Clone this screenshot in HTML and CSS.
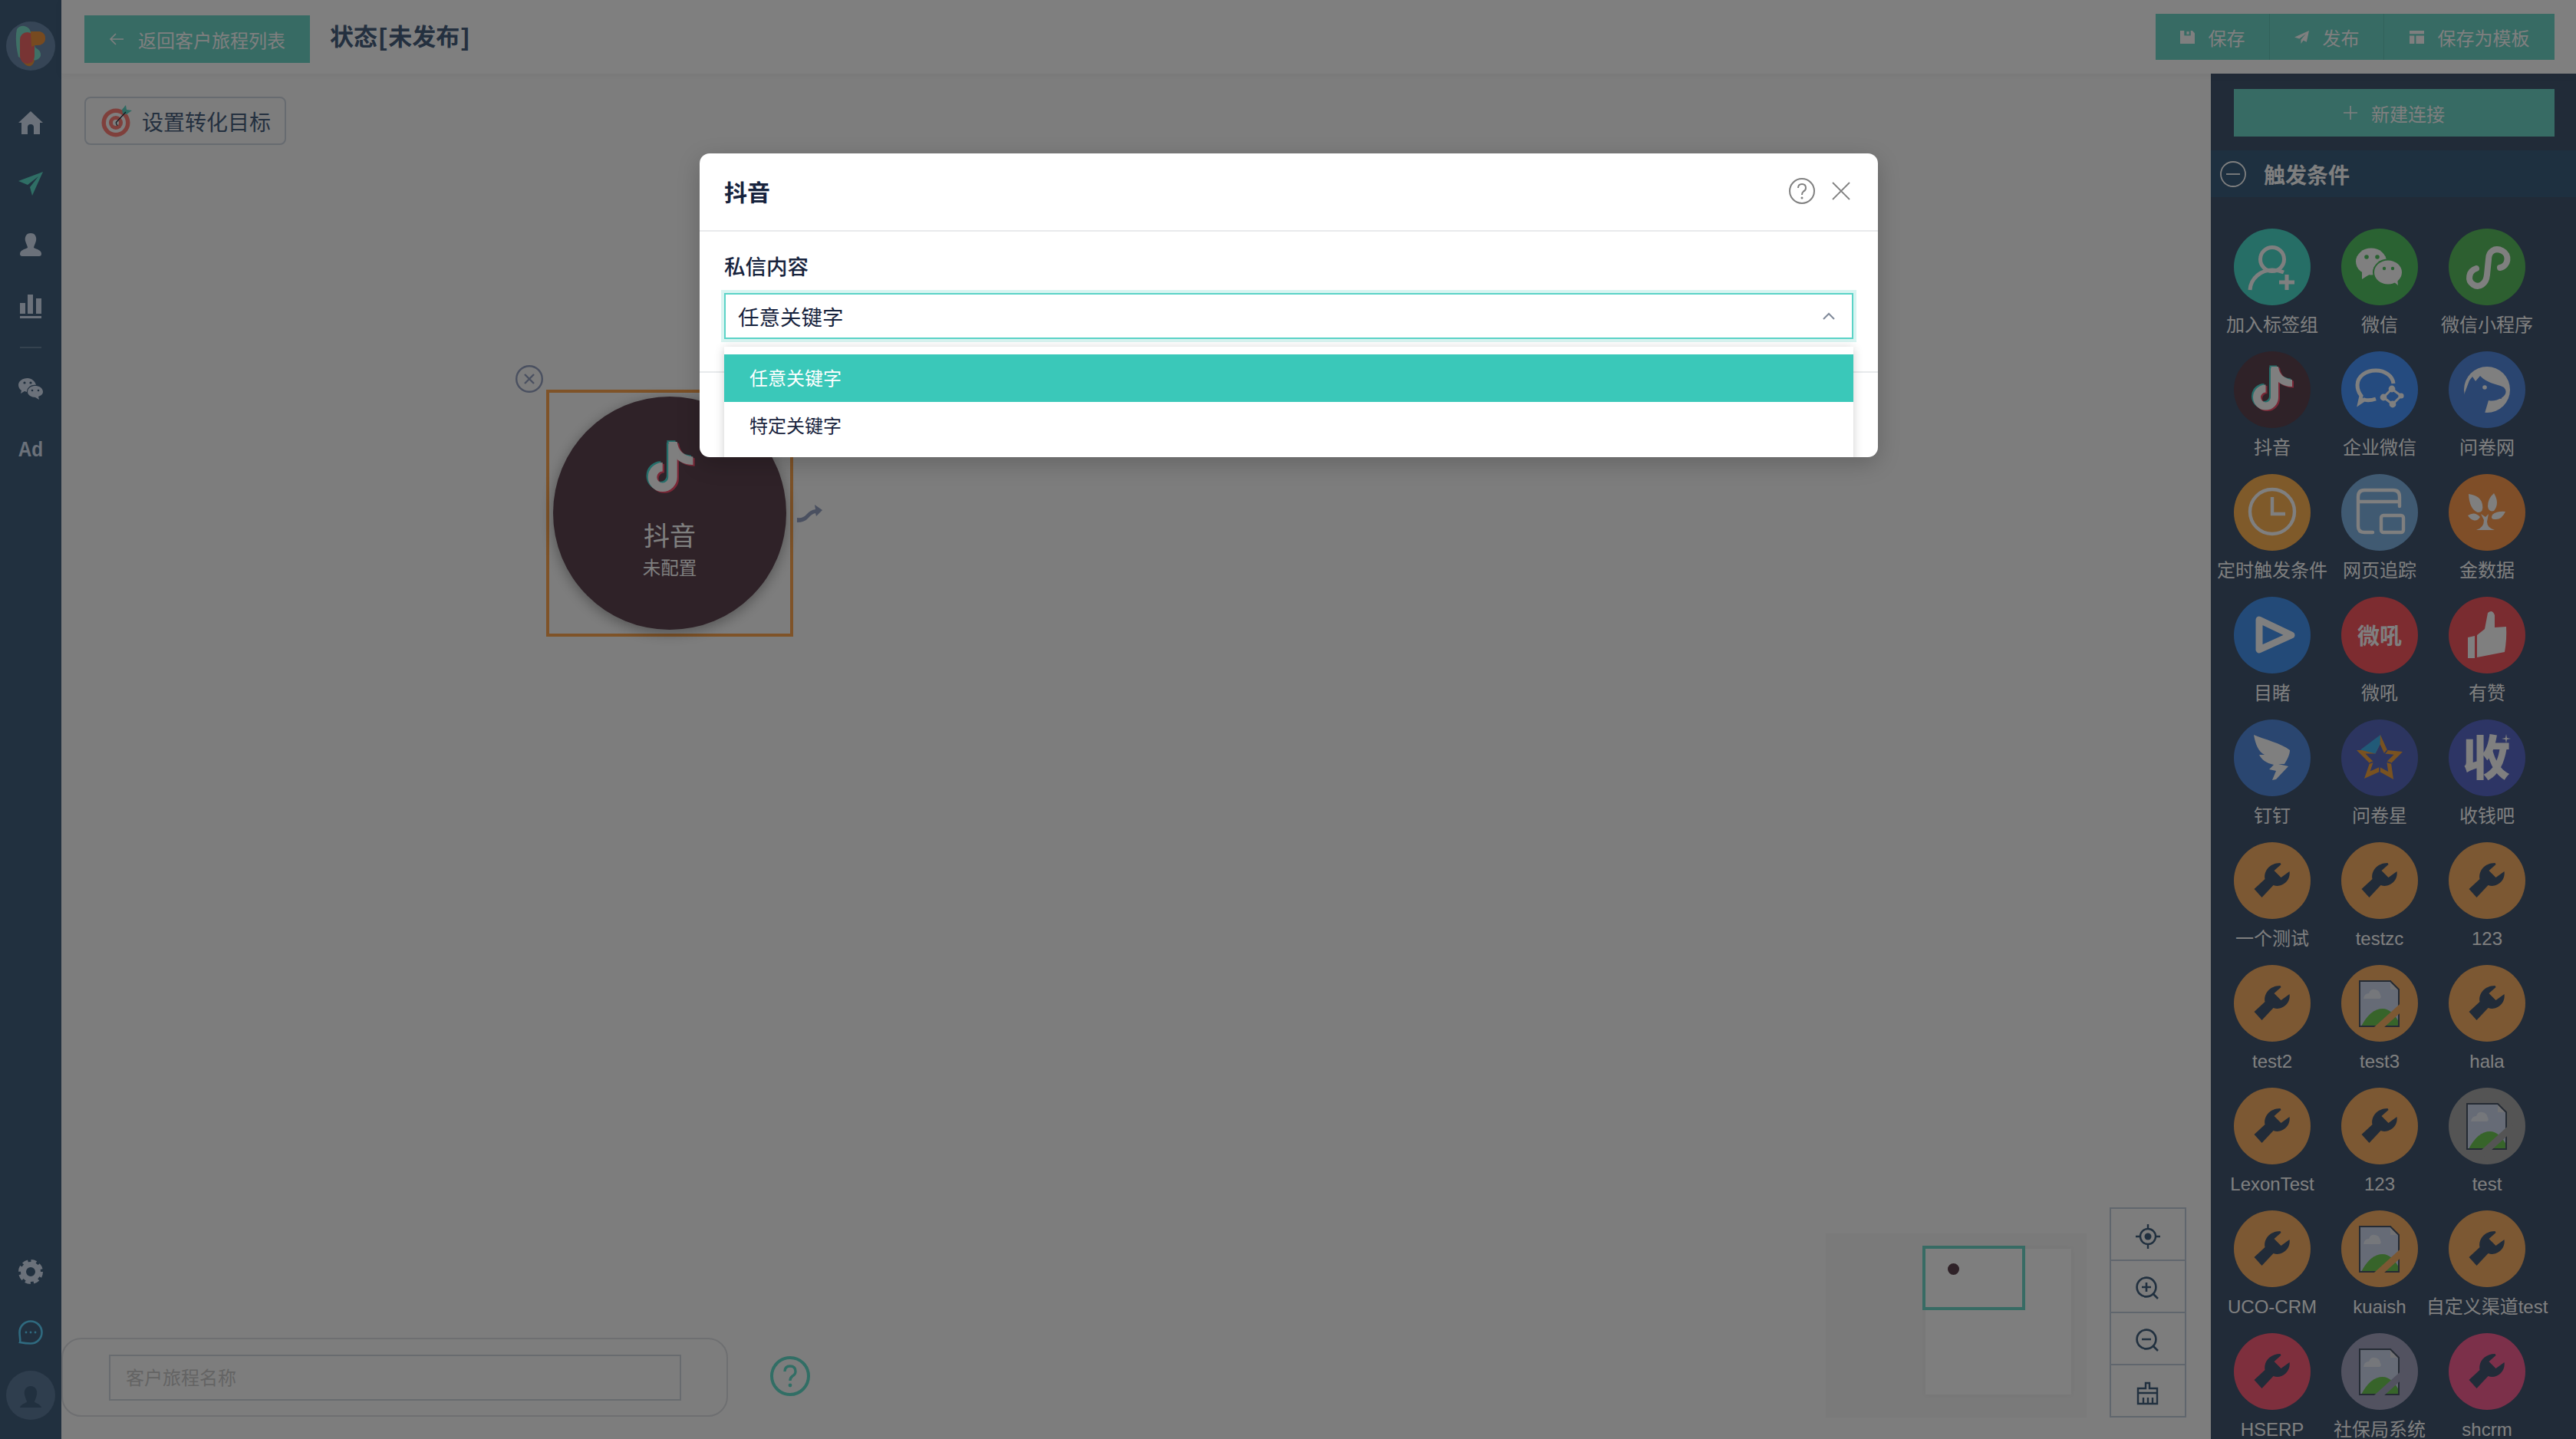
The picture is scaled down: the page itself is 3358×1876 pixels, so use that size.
FILE: index.html
```html
<!DOCTYPE html>
<html lang="zh-CN">
<head>
<meta charset="utf-8">
<title>客户旅程</title>
<link rel="stylesheet" href="styles.css">
</head>
<body>
<svg class="defs" width="0" height="0" aria-hidden="true">
  <symbol id="wrench" viewBox="0 0 100 100">
    <g transform="translate(26.5 26)"><path fill="#425670" d="M0 35 L14 22 C12 12 20 1 34 1 L35 3 L26 11 L35 20 L46 12 C48 24 36 34 25 30 L10 46 Z"/></g>
  </symbol>
  <symbol id="broken" viewBox="0 0 100 100">
    <path fill="#ccd6ec" d="M24 21 H64 L75 32 V80 H24 Z"/>
    <path fill="#e4e4e8" d="M64 21 L75 32 H64 Z"/>
    <path fill="#fff" opacity=".6" d="M29 44 Q30 37 36 37 Q38 31 44 32 Q50 33 51 39 Q53 43 50 44 Z"/>
    <path fill="#6fc854" d="M26 80 Q38 57 54 57 Q66 57 76 76 V80 Z"/>
    <path fill="none" stroke="#4a5668" stroke-width="2" d="M24 21 H64 L75 32 V80 H24 Z"/>
    <path fill="none" stroke="currentColor" stroke-width="9" d="M44 86 L84 50"/>
  </symbol>
  <symbol id="tiktok" viewBox="0 0 100 100">
    <g transform="translate(-2 -1.5)" fill="#4adcd4" stroke="#4adcd4">
      <path fill="none" stroke-width="10" d="M53 22 V60 A11.5 11.5 0 1 1 41.5 48.5"/>
      <path stroke="none" d="M48 20 H58 C59 30 66 36 76 37 V46 C69 46 63 44 58 40 Z"/>
    </g>
    <g transform="translate(2 1.5)" fill="#f4506e" stroke="#f4506e">
      <path fill="none" stroke-width="10" d="M53 22 V60 A11.5 11.5 0 1 1 41.5 48.5"/>
      <path stroke="none" d="M48 20 H58 C59 30 66 36 76 37 V46 C69 46 63 44 58 40 Z"/>
    </g>
    <g fill="#fff" stroke="#fff">
      <path fill="none" stroke-width="10" d="M53 22 V60 A11.5 11.5 0 1 1 41.5 48.5"/>
      <path stroke="none" d="M48 20 H58 C59 30 66 36 76 37 V46 C69 46 63 44 58 40 Z"/>
    </g>
  </symbol>
</svg>

<div class="app">
  <aside class="sidebar">
    <svg class="logo" viewBox="0 0 64 64">
      <circle cx="32" cy="32" r="32" fill="#6c8aac"/>
      <path fill="#7ee0cc" d="M14 10 Q18 5 24 6 Q31 8 32 14 L38 34 Q46 38 45 45 Q43 50 36 51 L26 52 L16 46 Q12 30 13 16 Z"/>
      <path fill="#ec9440" d="M20 50 Q26 60 32 58 Q36 56 37 50 Z"/>
      <rect x="18" y="14" width="19" height="41" rx="9.5" fill="#f06868"/>
      <path fill="#ee9440" d="M32 13 H44 Q52 15 51 24 Q49 32 38 31 L33 33 Z"/>
    </svg>
    <svg class="nav-ico nav-home" viewBox="0 0 32 32"><path fill="#d6e2f4" d="M16 2 L32 17 H28 V32 H20 V23 Q20 19 16 19 Q12 19 12 23 V32 H4 V17 H0 Z"/></svg>
    <svg class="nav-ico nav-send" viewBox="0 0 32 32"><path fill="#5edccb" d="M32 1 L0 13 L12 18 L26 7 L15 21 L18 32 Z"/></svg>
    <svg class="nav-ico nav-user" viewBox="0 0 32 32"><path fill="#d6e2f4" d="M16 1 C22 1 24 6 23 11 C22 15 20 18 20 20 C24 22 30 23 30 28 Q30 31 27 31 H5 Q2 31 2 28 C2 23 8 22 12 20 C12 18 10 15 9 11 C8 6 10 1 16 1 Z"/></svg>
    <svg class="nav-ico nav-bars" viewBox="0 0 32 32"><path fill="#d6e2f4" d="M2 12 H9 V26 H2 Z M12 1 H19 V26 H12 Z M23 6 H30 V26 H23 Z M2 29 H30 V32 H2 Z"/></svg>
    <div class="nav-rule"></div>
    <svg class="nav-ico nav-wx" viewBox="0 0 32 32"><path fill="#d6e2f4" d="M12 3 C5 3 0 7 0 12 C0 15 2 18 4 19 L3 23 L8 20 C9 20 10 21 11 21 C11 15 17 11 23 12 C22 7 17 3 12 3 Z"/><path fill="#d6e2f4" d="M22 13 C17 13 12 16 12 21 C12 25 17 28 22 28 L27 31 L26 27 C29 26 32 24 32 21 C32 16 27 13 22 13 Z"/><circle cx="8" cy="9" r="1.6" fill="#42607e"/><circle cx="16" cy="9" r="1.6" fill="#42607e"/><circle cx="18" cy="19" r="1.3" fill="#42607e"/><circle cx="26" cy="19" r="1.3" fill="#42607e"/></svg>
    <div class="nav-ad">Ad</div>
    <div class="nav-bottom">
      <svg class="nav-ico nav-gear" viewBox="0 0 32 32"><circle cx="16" cy="16" r="9.5" fill="none" stroke="#d6e2f4" stroke-width="7"/><circle cx="16" cy="16" r="14" fill="none" stroke="#d6e2f4" stroke-width="4" stroke-dasharray="7 4"/></svg>
      <svg class="nav-ico nav-chat" viewBox="0 0 32 32"><path fill="none" stroke="#5ed4ff" stroke-width="2.6" d="M16 1.5 C24 1.5 30.5 8 30.5 16 C30.5 24 24 30.5 16 30.5 C12 30.5 7 30 2 29 C3 27 1.5 22 1.5 16 C1.5 8 8 1.5 16 1.5 Z"/><circle cx="10" cy="16" r="1.4" fill="#5ed4ff"/><circle cx="16" cy="16" r="1.4" fill="#5ed4ff"/><circle cx="22" cy="16" r="1.4" fill="#5ed4ff"/></svg>
      <div class="avatar">
        <svg viewBox="0 0 64 64"><path fill="#42607e" d="M32 20 C38 20 41 25 40 31 C39 36 37 39 37 41 C42 43 46 46 46 48 V48 H18 C18 46 22 43 27 41 C27 39 25 36 24 31 C23 25 26 20 32 20 Z"/></svg>
      </div>
    </div>
  </aside>

  <div class="main">
    <header class="topbar">
      <button class="btn-back">
        <svg class="btn-ico" viewBox="0 0 20 20"><path fill="none" stroke="#fff" stroke-width="1.6" d="M19 10 H2 M9 3 L2 10 L9 17"/></svg>
        <span>返回客户旅程列表</span>
      </button>
      <h1 class="page-title">状态<span class="br">[</span>未发布<span class="br">]</span></h1>
      <div class="actions">
        <button class="act act-save">
          <svg class="act-ico" viewBox="0 0 18 18"><path fill="#fff" d="M0 1 H15 L18 4 V17 H0 Z"/><rect x="5" y="1" width="8" height="6" fill="#6ed6c8"/><rect x="8" y="2" width="3" height="3.5" fill="#fff"/></svg>
          <span>保存</span>
        </button>
        <button class="act act-pub">
          <svg class="act-ico" viewBox="0 0 18 18"><path fill="#fff" d="M18 1 L0 9 L6 11 L14 5 L8 12 V17 L11 13 L15 15 Z"/></svg>
          <span>发布</span>
        </button>
        <button class="act act-tpl">
          <svg class="act-ico" viewBox="0 0 18 18"><path fill="#fff" d="M0 1 H18 V5 H0 Z M0 7 H6 V17 H0 Z M8 7 H18 V17 H8 Z"/></svg>
          <span>保存为模板</span>
        </button>
      </div>
    </header>

    <div class="workspace">
      <section class="canvas">
        <button class="goal">
          <svg class="goal-ico" viewBox="0 0 40 42">
            <circle cx="19" cy="23" r="18.5" fill="#ff8078"/>
            <circle cx="19" cy="23" r="13" fill="#fff"/>
            <circle cx="19" cy="23" r="9" fill="#ff8078"/>
            <circle cx="19" cy="23" r="4" fill="#fff"/>
            <path fill="#5ed4c4" d="M32 0 L33 6 L40 7 L33 12 L28 11 L27 6 Z"/>
            <path stroke="#24303f" stroke-width="1.2" fill="none" d="M19 23 L32 9 M19 23 L21 27"/>
          </svg>
          <span>设置转化目标</span>
        </button>

        <svg class="node-close" viewBox="0 0 36 36"><circle cx="18" cy="18" r="16.8" fill="none" stroke="#94a0c0" stroke-width="2.4"/><path stroke="#94a0c0" stroke-width="2.4" d="M12 12 L24 24 M24 12 L12 24"/></svg>
        <div class="node">
          <div class="node-disc">
            <svg class="node-ico"><use href="#tiktok"/></svg>
            <div class="node-name">抖音</div>
            <div class="node-state">未配置</div>
          </div>
        </div>
        <svg class="node-link" viewBox="0 0 33 23"><path fill="#94a0c0" d="M0 17 Q8 18 12 13 Q17 7 24 6 L23 0 L33 7 L25 15 L24 11 Q19 12 15 17 Q10 23 0 23 Z"/></svg>

        <div class="minimap">
          <div class="mini-page"></div>
          <div class="mini-view"></div>
          <div class="mini-dot"></div>
        </div>

        <div class="toolbox">
          <div class="tool"><svg viewBox="0 0 32 32"><g fill="none" stroke="#42607e" stroke-width="2.4"><circle cx="16" cy="16" r="10"/><path d="M16 0 V6 M16 26 V32 M0 16 H6 M26 16 H32"/></g><circle cx="16" cy="16" r="4.5" fill="#42607e"/></svg></div>
          <div class="tool"><svg viewBox="0 0 32 32"><g fill="none" stroke="#42607e" stroke-width="2.6"><circle cx="14" cy="14" r="12.4"/><path d="M23 23 L29 29 M14 8 V20 M8 14 H20"/></g></svg></div>
          <div class="tool"><svg viewBox="0 0 32 32"><g fill="none" stroke="#42607e" stroke-width="2.6"><circle cx="14" cy="14" r="12.4"/><path d="M23 23 L29 29 M8 14 H20"/></g></svg></div>
          <div class="tool"><svg viewBox="0 0 32 32"><g fill="none" stroke="#42607e" stroke-width="2.4"><path d="M13 10 V3 H18 V10 H28 V30 H3 V10 Z M3 16 H28 M10 30 V22 M16 30 V22 M22 30 V22"/></g></svg></div>
        </div>

        <div class="namebox">
          <input class="name-input" type="text" placeholder="客户旅程名称">
        </div>
        <svg class="help-ico" viewBox="0 0 52 52"><circle cx="26" cy="26" r="24" fill="none" stroke="#62dcca" stroke-width="4"/><path fill="none" stroke="#62dcca" stroke-width="3.4" d="M19 20 Q19 13 26 13 Q33 13 33 20 Q33 24 29 26 Q26 28 26 32"/><circle cx="26" cy="38" r="2.4" fill="#62dcca"/></svg>
      </section>

      <aside class="panel">
        <button class="new-conn">
          <svg class="plus" viewBox="0 0 18 18"><path stroke="#fff" stroke-width="1.6" d="M9 0 V18 M0 9 H18"/></svg>
          <span>新建连接</span>
        </button>
        <div class="section-bar">
          <svg class="sec-ico" viewBox="0 0 34 34"><circle cx="17" cy="17" r="16" fill="none" stroke="#fff" stroke-width="1.8"/><path stroke="#fff" stroke-width="1.8" d="M8 17 H26"/></svg>
          <span>触发条件</span>
        </div>
        <div class="grid">
          <div class="item"><div class="disc c-tag"><svg viewBox="0 0 100 100"><g fill="none" stroke="#fff" stroke-width="5"><circle cx="50" cy="40" r="15.5"/><path d="M21 80 C22 64 36 54 50 54 Q58 54 65 57"/></g><path stroke="#fff" stroke-width="5" d="M59 70 H79 M69 60 V80"/></svg></div><div class="label">加入标签组</div></div>
          <div class="item"><div class="disc c-wx"><svg viewBox="0 0 100 100"><ellipse cx="39" cy="43" rx="20" ry="17.5" fill="#fff"/><path fill="#fff" d="M27 56 L27 66 L38 59 Z"/><ellipse cx="61" cy="57" rx="20" ry="17.5" fill="#54c464"/><ellipse cx="61" cy="57" rx="18" ry="15.5" fill="#fff"/><path fill="#fff" d="M68 69 L74 74 L73 64 Z"/><circle cx="33" cy="37" r="2.8" fill="#54c464"/><circle cx="47" cy="37" r="2.8" fill="#54c464"/><circle cx="56" cy="52" r="2.2" fill="#54c464"/><circle cx="67" cy="52" r="2.2" fill="#54c464"/></svg></div><div class="label">微信</div></div>
          <div class="item"><div class="disc c-mini"><svg viewBox="0 0 100 100"><path fill="none" stroke="#fff" stroke-width="8" stroke-linecap="round" d="M67 51 C78 49 80 34 70 29 C60 24 52 30 52 40 L50 60 C49 72 40 78 32 73 C24 68 26 55 36 52"/></svg></div><div class="label">微信小程序</div></div>

          <div class="item"><div class="disc c-dy"><svg viewBox="0 0 100 100"><use href="#tiktok"/></svg></div><div class="label">抖音</div></div>
          <div class="item"><div class="disc c-wework"><svg viewBox="0 0 100 100"><path fill="none" stroke="#fff" stroke-width="5" d="M45 62 Q36 65 30 63 L24 67 L26 58 Q21 52 21 44 C21 32 33 25 45 25 C57 25 67 32 68 42"/><path fill="none" stroke="#fff" stroke-width="3" d="M66 49 L78 58 L67 69 L55 60 Z"/><circle cx="66" cy="49" r="4.4" fill="#fff"/><circle cx="78" cy="58" r="3.6" fill="#fff"/><circle cx="67" cy="69" r="4.4" fill="#fff"/><circle cx="55" cy="60" r="4.4" fill="#fff"/></svg></div><div class="label">企业微信</div></div>
          <div class="item"><div class="disc c-wjw"><svg viewBox="0 0 100 100"><circle cx="50" cy="50" r="30" fill="#fff"/><path fill="#548ae0" d="M18 62 L27 38 L31 33 L35 39 L41 32 C50 42 62 42 72 47 Q78 54 70 60 Q60 66 52 64 L46 84 L18 84 Z"/><circle cx="47" cy="47" r="2.8" fill="#fff"/><circle cx="68" cy="61" r="1" fill="#548ae0"/></svg></div><div class="label">问卷网</div></div>

          <div class="item"><div class="disc c-timer"><svg viewBox="0 0 100 100"><circle cx="50" cy="49" r="29" fill="none" stroke="#fff" stroke-width="4.4"/><path fill="none" stroke="#fff" stroke-width="4.4" d="M50 30 V52 H67"/></svg></div><div class="label">定时触发条件</div></div>
          <div class="item"><div class="disc c-web"><svg viewBox="0 0 100 100"><g fill="none" stroke="#fff" stroke-width="4.4" stroke-linecap="round"><path d="M41 76 H30 Q22 76 22 68 V30 Q22 21 30 21 H68 Q76 21 76 30 V42 M22 36 H76"/><rect x="52" y="54" width="29" height="22" rx="3"/></g></svg></div><div class="label">网页追踪</div></div>
          <div class="item"><div class="disc c-jsj"><svg viewBox="0 0 100 100"><g fill="#fff"><path d="M26 26 Q42 28 44 40 Q46 50 38 50 Q27 46 26 26 Z"/><path d="M59 25 Q67 38 59 48 Q52 50 51 42 Q51 32 59 25 Z"/><path d="M25 54 Q34 48 41 56 Q37 62 32 60 Q28 59 25 54 Z"/><path d="M74 49 Q69 60 60 59 Q54 59 57 53 Q63 48 74 49 Z"/><path d="M36 73 Q46 70 46 60 L42 52 L48 56 L52 52 L50 62 Q50 70 60 73 Z"/></g></svg></div><div class="label">金数据</div></div>

          <div class="item"><div class="disc c-mudu"><svg viewBox="0 0 100 100"><path fill="none" stroke="#fff" stroke-width="9" stroke-linejoin="round" d="M33 30 L75 50 L33 69 Z"/></svg></div><div class="label">目睹</div></div>
          <div class="item"><div class="disc c-vhall"><span class="disc-text">微吼</span></div><div class="label">微吼</div></div>
          <div class="item"><div class="disc c-youzan"><svg viewBox="0 0 100 100"><path fill="#fff" d="M25 53 L34 51 V80 H25 Z M37 50 L47 42 L51 21 Q57 16 60 24 L60 40 L75 39 Q76 55 73 72 L37 79 Z"/></svg></div><div class="label">有赞</div></div>

          <div class="item"><div class="disc c-ding"><svg viewBox="0 0 100 100"><path fill="#fff" d="M26 20 C40 26 62 31 73 40 C73 46 69 53 66 58 L58 58 L71 61 L55 78 L50 79 L55 67 L46 65 L52 59 C42 57 36 52 33 46 L40 46 C32 42 28 32 26 20 Z"/></svg></div><div class="label">钉钉</div></div>
          <div class="item"><div class="disc c-wjx"><svg viewBox="0 0 100 100"><path fill="#f2a540" d="M51 20 L60 40 L80 42 L65 57 L68 78 L50 68 L30 77 L37 57 L20 40 L41 40 Z"/><path fill="#586ac0" d="M50.6 32.2 L56.2 44.6 L68.6 45.8 L59.3 55.1 L61.2 68.1 L50 61.9 L37.6 67.5 L41.9 55.1 L31.4 44.6 L44.4 44.6 Z"/><path fill="#42b4f0" d="M51 20 L25 39.5 L44.4 44.6 L50.6 32.2 Z"/><path fill="none" stroke="#586ac0" stroke-width="1.6" d="M60 40 L56 45 M65 57 L59 55 M50 68 L50 62 M37 57 L42 55"/></svg></div><div class="label">问卷星</div></div>
          <div class="item"><div class="disc c-sqb"><span class="disc-big">收</span><svg class="sparkle" viewBox="0 0 12 12"><path fill="#fff" d="M6 0 L7 5 L12 6 L7 7 L6 12 L5 7 L0 6 L5 5 Z"/></svg></div><div class="label">收钱吧</div></div>

          <div class="item"><div class="disc c-tool"><svg viewBox="0 0 100 100"><use href="#wrench"/></svg></div><div class="label">一个测试</div></div>
          <div class="item"><div class="disc c-tool"><svg viewBox="0 0 100 100"><use href="#wrench"/></svg></div><div class="label">testzc</div></div>
          <div class="item"><div class="disc c-tool"><svg viewBox="0 0 100 100"><use href="#wrench"/></svg></div><div class="label">123</div></div>

          <div class="item"><div class="disc c-tool"><svg viewBox="0 0 100 100"><use href="#wrench"/></svg></div><div class="label">test2</div></div>
          <div class="item"><div class="disc c-tool"><svg viewBox="0 0 100 100"><use href="#broken"/></svg></div><div class="label">test3</div></div>
          <div class="item"><div class="disc c-tool"><svg viewBox="0 0 100 100"><use href="#wrench"/></svg></div><div class="label">hala</div></div>

          <div class="item"><div class="disc c-tool"><svg viewBox="0 0 100 100"><use href="#wrench"/></svg></div><div class="label">LexonTest</div></div>
          <div class="item"><div class="disc c-tool"><svg viewBox="0 0 100 100"><use href="#wrench"/></svg></div><div class="label">123</div></div>
          <div class="item"><div class="disc c-gray"><svg viewBox="0 0 100 100"><use href="#broken"/></svg></div><div class="label">test</div></div>

          <div class="item"><div class="disc c-tool"><svg viewBox="0 0 100 100"><use href="#wrench"/></svg></div><div class="label">UCO-CRM</div></div>
          <div class="item"><div class="disc c-tool"><svg viewBox="0 0 100 100"><use href="#broken"/></svg></div><div class="label">kuaish</div></div>
          <div class="item"><div class="disc c-tool"><svg viewBox="0 0 100 100"><use href="#wrench"/></svg></div><div class="label">自定义渠道test</div></div>

          <div class="item"><div class="disc c-hs"><svg viewBox="0 0 100 100"><use href="#wrench"/></svg></div><div class="label">HSERP</div></div>
          <div class="item"><div class="disc c-slate"><svg viewBox="0 0 100 100"><use href="#broken"/></svg></div><div class="label">社保局系统</div></div>
          <div class="item"><div class="disc c-sh"><svg viewBox="0 0 100 100"><use href="#wrench"/></svg></div><div class="label">shcrm</div></div>
        </div>
      </aside>
    </div>
  </div>
</div>

<div class="mask"></div>

<div class="modal">
  <div class="modal-head">
    <span class="modal-title">抖音</span>
    <svg class="modal-help" viewBox="0 0 34 34"><circle cx="17" cy="17" r="16" fill="none" stroke="#808080" stroke-width="2"/><path fill="none" stroke="#808080" stroke-width="2" d="M12 13 Q12 8 17 8 Q22 8 22 13 Q22 16 19 17.5 Q17 19 17 22"/><circle cx="17" cy="26" r="1.5" fill="#808080"/></svg>
    <svg class="modal-x" viewBox="0 0 24 24"><path stroke="#808080" stroke-width="1.8" d="M1 1 L23 23 M23 1 L1 23"/></svg>
  </div>
  <div class="modal-body">
    <div class="field-label">私信内容</div>
    <div class="select">
      <span>任意关键字</span>
      <svg class="select-arrow" viewBox="0 0 16 10"><path fill="none" stroke="#808a9a" stroke-width="2" d="M1 9 L8 2 L15 9"/></svg>
    </div>
  </div>
  <div class="modal-foot"></div>
  <div class="dropdown">
    <div class="opt opt-on">任意关键字</div>
    <div class="opt">特定关键字</div>
  </div>
</div>
</body>
</html>
```

FILE: styles.css
```css
* { box-sizing: border-box; }
html, body { margin: 0; padding: 0; }
body {
  width: 3358px;
  height: 1876px;
  overflow: hidden;
  position: relative;
  background: #fff;
  font-family: "Liberation Sans", "Noto Sans CJK SC", sans-serif;
  color: #48607e;
}
button { font: inherit; border: 0; padding: 0; cursor: pointer; }
.defs { position: absolute; }

.app { display: flex; width: 3358px; height: 1876px; }

/* left navigation */
.sidebar {
  width: 80px;
  flex: none;
  background: #42607e;
  display: flex;
  flex-direction: column;
  align-items: center;
  padding-top: 28px;
}
.logo { width: 64px; height: 64px; flex: none; margin-bottom: 51px; }
.nav-ico { width: 32px; height: 32px; flex: none; display: block; }
.nav-send { margin-top: 48px; }
.nav-user { margin-top: 48px; }
.nav-bars { margin-top: 48px; }
.nav-rule { width: 28px; height: 2px; background: #6a859f; margin-top: 37px; flex: none; }
.nav-wx { margin-top: 36px; }
.nav-ad {
  margin-top: 48px;
  font-size: 27px;
  line-height: 32px;
  font-weight: 700;
  transform: scaleX(.9);
  color: #d6e2f4;
}
.nav-bottom {
  margin-top: auto;
  display: flex;
  flex-direction: column;
  align-items: center;
  padding-bottom: 25px;
}
.nav-chat { margin-top: 47px; }
.avatar {
  width: 64px;
  height: 64px;
  border-radius: 50%;
  background: #5f7c9c;
  margin-top: 34px;
}
.avatar svg { display: block; width: 64px; height: 64px; }

/* main column */
.main { flex: 1; min-width: 0; display: flex; flex-direction: column; }
.topbar {
  height: 96px;
  flex: none;
  display: flex;
  align-items: flex-start;
  padding: 18px 28px 0 30px;
  background: #fff;
  box-shadow: 0 2px 10px rgba(0, 0, 0, .05);
  position: relative;
  z-index: 2;
}
.btn-back {
  width: 294px;
  height: 62px;
  margin-top: 2px;
  background: #6ed6c8;
  color: #fff;
  font-size: 24px;
  display: flex;
  align-items: center;
  justify-content: center;
  gap: 18px;
}
.btn-ico { width: 20px; height: 20px; flex: none; }
.page-title {
  margin: 0 0 0 26px;
  font-size: 31px;
  line-height: 62px;
  font-weight: 700;
  color: #48607e;
}
.br { padding: 0 2px; }
.actions { margin-left: auto; display: flex; height: 60px; background: #6ed6c8; }
.act {
  background: #6ed6c8;
  color: #fff;
  font-size: 24px;
  display: flex;
  align-items: center;
  justify-content: center;
  gap: 18px;
  height: 60px;
}
.act-save, .act-pub { width: 149px; border-right: 1px solid #62c4b6; }
.act-tpl { width: 222px; }
.act-ico { width: 19px; height: 19px; flex: none; }

.workspace { flex: 1; min-height: 0; display: flex; }

/* free canvas */
.canvas { flex: 1; min-width: 0; position: relative; background: #fbfbfb; padding: 30px 0 0 30px; }
.goal {
  width: 263px;
  height: 63px;
  border: 2px solid #cfd6e0;
  border-radius: 8px;
  background: transparent;
  color: #48607e;
  font-size: 28px;
  display: flex;
  align-items: center;
  padding-left: 20px;
  gap: 13px;
}
.goal-ico { width: 40px; height: 42px; flex: none; }

.node-close { position: absolute; left: 592px; top: 380px; width: 36px; height: 36px; }
.node {
  position: absolute;
  left: 632px;
  top: 412px;
  width: 322px;
  height: 322px;
  border: 4px solid #fea750;
  display: flex;
  align-items: center;
  justify-content: center;
}
.node-disc {
  width: 304px;
  height: 304px;
  border-radius: 50%;
  background: #5e4450;
  box-shadow: 0 4px 18px rgba(0, 0, 0, .35);
  display: flex;
  flex-direction: column;
  align-items: center;
  padding-top: 36px;
  color: #fff;
}
.node-ico { width: 115px; height: 115px; flex: none; }
.node-name { font-size: 34px; line-height: 44px; margin-top: 9px; }
.node-state { font-size: 23.5px; line-height: 36px; margin-top: 2px; }
.node-link { position: absolute; left: 959px; top: 562px; width: 33px; height: 23px; }

.minimap { position: absolute; left: 2300px; top: 1512px; width: 340px; height: 240px; background: #f4f4f4; }
.mini-page { position: absolute; left: 130px; top: 20px; width: 190px; height: 190px; background: #fcfcfc; box-shadow: 0 0 6px rgba(0, 0, 0, .06); }
.mini-view { position: absolute; left: 126px; top: 16px; width: 134px; height: 84px; border: 4px solid #6ed6c8; }
.mini-dot { position: absolute; left: 159px; top: 39px; width: 15px; height: 15px; border-radius: 50%; background: #5e4450; }

.toolbox {
  position: absolute;
  left: 2670px;
  top: 1478px;
  width: 100px;
  height: 274px;
  border: 2px solid #c0ccda;
  display: flex;
  flex-direction: column;
}
.tool {
  flex: 1;
  display: flex;
  align-items: center;
  justify-content: center;
  padding-top: 5px;
  border-bottom: 2px solid #c0ccda;
}
.tool:last-child { border-bottom: 0; }
.tool svg { width: 32px; height: 32px; }

.namebox {
  position: absolute;
  left: 0;
  top: 1648px;
  width: 869px;
  height: 103px;
  border: 2px solid #dcdee2;
  border-radius: 26px;
  display: flex;
  align-items: center;
  padding-left: 60px;
}
.name-input {
  width: 746px;
  height: 60px;
  border: 2px solid #d0d6de;
  background: transparent;
  padding: 2px 20px 0;
  font: 24px "Liberation Sans", "Noto Sans CJK SC", sans-serif;
  outline: none;
}
.name-input::placeholder { color: #c8c8c8; opacity: 1; }
.help-ico { position: absolute; left: 924px; top: 1672px; width: 52px; height: 52px; }

/* right panel */
.panel {
  width: 476px;
  flex: none;
  background: #425670;
  overflow: hidden;
  padding-top: 20px;
}
.new-conn {
  display: flex;
  width: 418px;
  height: 62px;
  margin-left: 30px;
  background: #6ed6c8;
  color: #fff;
  font-size: 24px;
  align-items: center;
  justify-content: center;
  gap: 18px;
}
.plus { width: 18px; height: 18px; flex: none; }
.section-bar {
  height: 61px;
  margin-top: 18px;
  background: #3c6080;
  display: flex;
  align-items: center;
  padding-left: 12px;
  gap: 23px;
  color: #fff;
  font-size: 28px;
  font-weight: 700;
}
.sec-ico { width: 34px; height: 34px; flex: none; }
.grid {
  display: grid;
  grid-template-columns: repeat(3, 140px);
  grid-auto-rows: 160px;
  padding: 41px 0 0 10px;
}
.item { display: flex; flex-direction: column; align-items: center; }
.disc {
  width: 100px;
  height: 100px;
  border-radius: 50%;
  flex: none;
  position: relative;
  display: flex;
  align-items: center;
  justify-content: center;
  color: #fff;
}
.disc > svg:first-child { width: 100px; height: 100px; display: block; }
.label { margin-top: 9px; font-size: 24px; line-height: 34px; color: #fff; white-space: nowrap; }
.disc-text { font-size: 29px; line-height: 36px; font-weight: 700; padding-top: 3px; }
.disc-big { font-size: 62px; line-height: 64px; font-weight: 900; padding-top: 3px; margin-left: -2px; }
.sparkle { position: absolute; left: 69px; top: 19px; width: 12px; height: 12px; }

.c-tag { background: #4cdccc; }
.c-wx { background: #54c464; }
.c-mini { background: #5abe60; }
.c-dy { background: #5e4450; }
.c-wework { background: #4a96ff; }
.c-wjw { background: #548ae0; }
.c-timer { background: #ffb454; }
.c-web { background: #80b4e4; }
.c-jsj { background: #fe9c50; }
.c-mudu { background: #4694f0; }
.c-vhall { background: #fa5860; }
.c-youzan { background: #f45860; }
.c-ding { background: #548ce0; }
.c-wjx { background: #586ac0; }
.c-sqb { background: #5a6aca; }
.c-tool { background: #f8b066; color: #f8b066; }
.c-gray { background: #a8a8a8; color: #a8a8a8; }
.c-hs { background: #fc5e7a; }
.c-slate { background: #a4a4c0; color: #a4a4c0; }
.c-sh { background: #f86094; }

/* modal */
.mask { position: absolute; inset: 0; background: rgba(0, 0, 0, .5); z-index: 10; }
.modal {
  position: absolute;
  left: 912px;
  top: 200px;
  width: 1536px;
  height: 396px;
  background: #fff;
  border-radius: 13px;
  overflow: hidden;
  z-index: 11;
  display: flex;
  flex-direction: column;
  color: #17233d;
  box-shadow: 0 8px 30px rgba(0, 0, 0, .2);
}
.modal-head {
  height: 102px;
  flex: none;
  display: flex;
  align-items: center;
  padding: 0 36px 0 32px;
  border-bottom: 2px solid #e8eaec;
}
.modal-title { font-size: 30px; line-height: 44px; font-weight: 700; padding-top: 4px; }
.modal-help { width: 34px; height: 34px; margin-left: auto; margin-top: -2px; }
.modal-x { width: 24px; height: 24px; margin-left: 22px; margin-top: -2px; }
.modal-body { height: 182px; flex: none; padding: 27px 32px 0; }
.field-label { font-size: 27.5px; line-height: 40px; font-weight: 500; margin-bottom: 13px; }
.select {
  height: 60px;
  border: 2px solid #5bd3c7;
  box-shadow: 0 0 0 4px rgba(58, 200, 185, .2);
  display: flex;
  align-items: center;
  justify-content: space-between;
  padding: 0 22px 0 16px;
  font-size: 27.5px;
}
.select-arrow { width: 16px; height: 10px; }
.modal-foot { flex: 1; border-top: 2px solid #e8eaec; }
.dropdown {
  position: absolute;
  left: 32px;
  top: 252px;
  width: 1472px;
  height: 214px;
  padding: 10px 0;
  background: #fff;
  box-shadow: 0 2px 12px rgba(0, 0, 0, .2);
}
.opt {
  height: 62px;
  display: flex;
  align-items: center;
  padding: 0 0 3px 33px;
  font-size: 24px;
}
.opt-on { background: #3ac8b9; color: #fff; }
```
